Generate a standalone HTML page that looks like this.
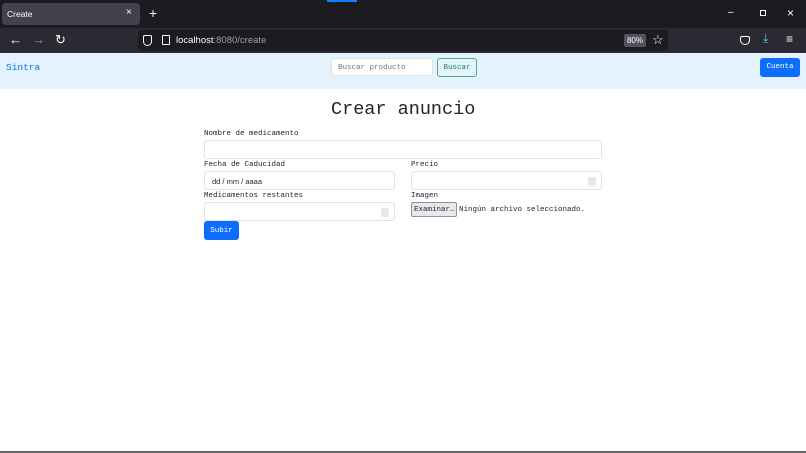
<!DOCTYPE html><html><head><meta charset="utf-8"><style>
*{box-sizing:border-box;margin:0;padding:0}
body{width:806px;height:453px;overflow:hidden;background:#fff;position:relative;font-family:"Liberation Mono",monospace;color:#212529}
.a{position:absolute}
.inp{position:absolute;background:#fff;border:1px solid #dee2e6;border-radius:3px}
.lbl{position:absolute;font-size:7.5px;color:#212529}
.sp{position:absolute;right:5px;top:5px;width:8px;height:9px;background:#e8e8e8;border-radius:2px}
.ui{font-family:"Liberation Sans",sans-serif}
</style></head><body>
<div class="a" style="left:0;top:0;width:806px;height:28px;background:#1c1b22"></div>
<div class="a" style="left:327px;top:0;width:30px;height:2px;background:#0a84ff"></div>
<div class="a" style="left:2px;top:3px;width:138px;height:22px;background:#42414d;border-radius:4px"></div>
<div class="a ui" style="left:7px;top:9px;font-size:8.5px;color:#fbfbfe">Create</div>
<div class="a ui" style="left:126px;top:7px;font-size:10px;color:#fbfbfe">×</div>
<div class="a ui" style="left:149px;top:5px;font-size:14px;color:#fbfbfe">+</div>
<div class="a ui" style="left:728px;top:7px;font-size:10px;color:#fbfbfe">–</div>
<div class="a" style="left:760px;top:10px;width:6px;height:6px;border:1px solid #fbfbfe"></div>
<div class="a ui" style="left:787px;top:6px;font-size:12px;color:#fbfbfe">×</div>
<div class="a" style="left:0;top:28px;width:806px;height:25px;background:#2b2a33"></div>
<div class="a ui" style="left:9px;top:32px;font-size:13px;color:#fbfbfe">←</div>
<div class="a ui" style="left:32px;top:32px;font-size:13px;color:#8f8f9d">→</div>
<div class="a ui" style="left:55px;top:32px;font-size:13px;color:#fbfbfe">↻</div>
<div class="a" style="left:138px;top:30px;width:530px;height:21px;background:#1c1b22;border-radius:4px"></div>
<div class="a" style="left:143px;top:35px;width:9px;height:11px;border:1.3px solid #fbfbfe;border-radius:2px 2px 5px 5px"></div>
<div class="a" style="left:162px;top:35px;width:8px;height:10px;border:1.3px solid #fbfbfe;border-radius:1px"></div>
<div class="a ui" style="left:176px;top:35px;font-size:9.5px;color:#fbfbfe">localhost<span style="color:#9e9ea6">:8080/create</span></div>
<div class="a ui" style="left:624px;top:34px;width:22px;height:13px;background:#52525e;border-radius:2px;font-size:8px;color:#fbfbfe;text-align:center;line-height:13px">80%</div>
<div class="a ui" style="left:652px;top:32px;font-size:13px;color:#fbfbfe">☆</div>
<div class="a" style="left:740px;top:36px;width:10px;height:9px;border:1.3px solid #fbfbfe;border-radius:2px 2px 5px 5px"></div>
<div class="a ui" style="left:763px;top:31px;font-size:12px;color:#54c6ff">⤓</div>
<div class="a ui" style="left:786px;top:32px;font-size:12px;color:#fbfbfe">≡</div>
<div class="a" style="left:0;top:53px;width:806px;height:36px;background:#e3f2fd"></div>
<div class="a" style="left:6px;top:62px;font-size:9.5px;color:#0d6efd">Sintra</div>
<div class="inp" style="left:331px;top:58px;width:102px;height:18px;font-size:7.5px;color:#6c757d;padding:5px 6px">Buscar producto</div>
<div class="a" style="left:437px;top:58px;width:40px;height:19px;border:1px solid #5aa58a;border-radius:3px;font-size:7.5px;color:#198754;text-align:center;line-height:18px">Buscar</div>
<div class="a" style="left:760px;top:58px;width:40px;height:19px;background:#0d6efd;border-radius:3px;font-size:7.5px;color:#fff;text-align:center;line-height:19px">Cuenta</div>
<div class="a" style="left:331px;top:99px;font-size:18.5px;color:#212529">Crear anuncio</div>
<div class="lbl" style="left:204px;top:130px">Nombre de medicamento</div>
<div class="inp" style="left:204px;top:140px;width:398px;height:19px"></div>
<div class="lbl" style="left:204px;top:161px">Fecha de Caducidad</div>
<div class="inp" style="left:204px;top:171px;width:191px;height:19px;font-size:7.5px;padding:5px 7px;font-family:'Liberation Sans',sans-serif">dd / mm / aaaa</div>
<div class="lbl" style="left:411px;top:161px">Precio</div>
<div class="inp" style="left:411px;top:171px;width:191px;height:19px"><div class="sp"></div></div>
<div class="lbl" style="left:204px;top:192px">Medicamentos restantes</div>
<div class="inp" style="left:204px;top:202px;width:191px;height:19px"><div class="sp"></div></div>
<div class="lbl" style="left:411px;top:192px">Imagen</div>
<div class="a" style="left:411px;top:202px;width:46px;height:15px;background:#e9e9ed;border:1px solid #8f8f9d;border-radius:2px;font-size:7.5px;padding:3px 2px;white-space:nowrap;overflow:hidden">Examinar…</div>
<div class="lbl" style="left:459px;top:206px">Ningún archivo seleccionado.</div>
<div class="a" style="left:204px;top:221px;width:35px;height:19px;background:#0d6efd;border-radius:3px;font-size:7.5px;color:#fff;text-align:center;line-height:20px">Subir</div>
<div class="a" style="left:0;top:451px;width:806px;height:2px;background:#666"></div>
</body></html>
